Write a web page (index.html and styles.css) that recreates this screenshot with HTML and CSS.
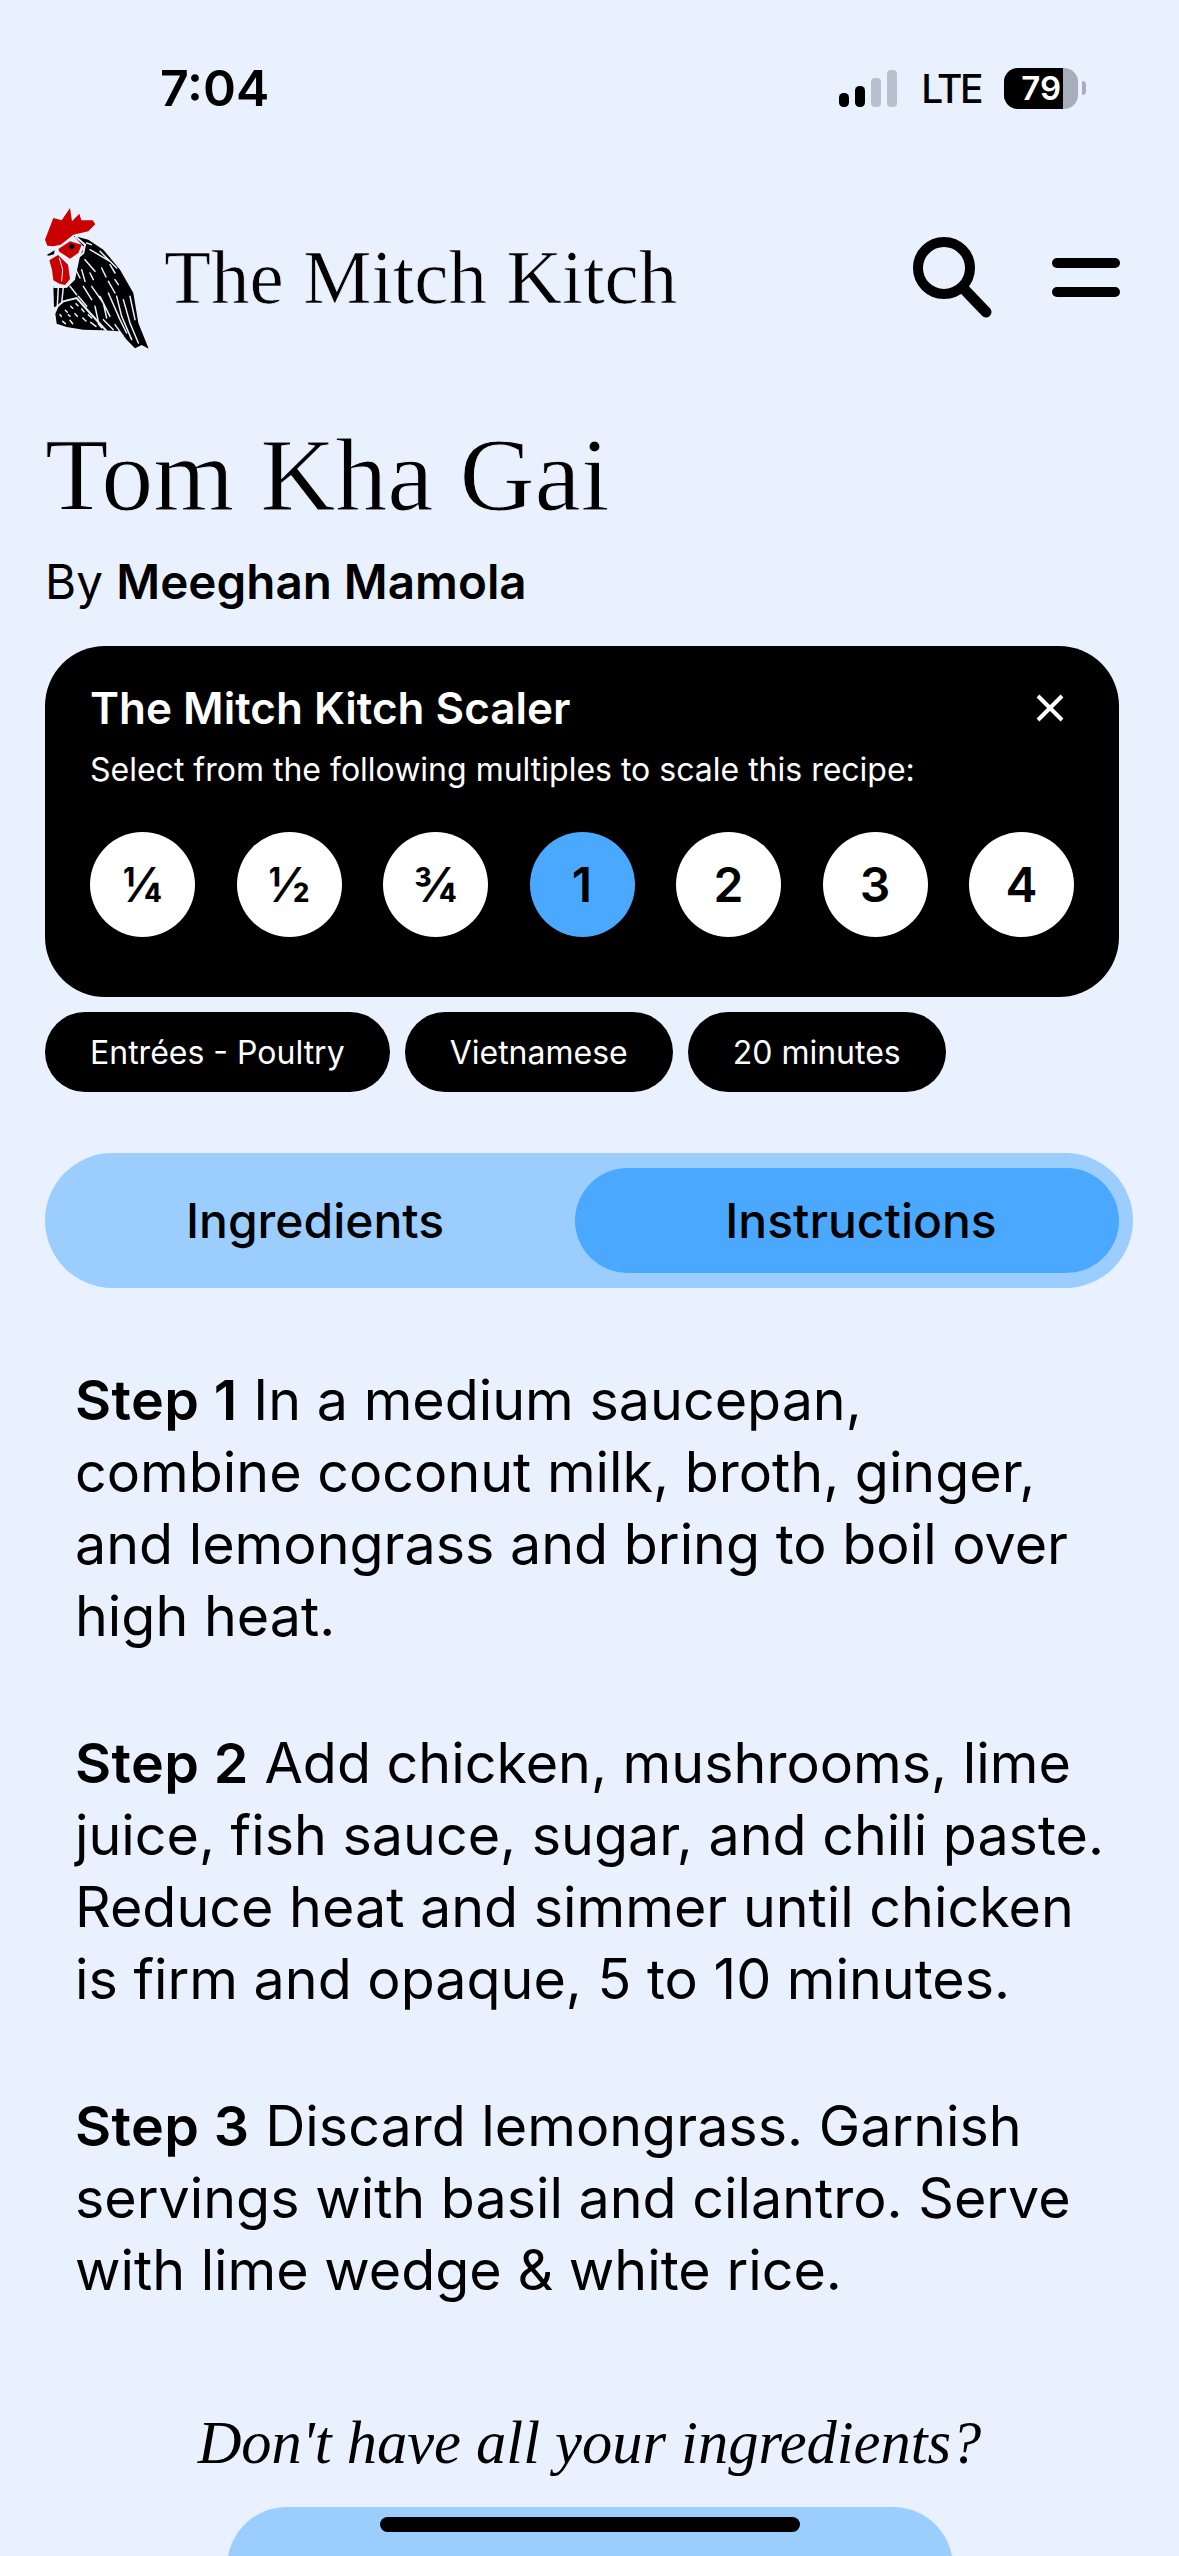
FILE: index.html
```html
<!DOCTYPE html>
<html lang="en">
<head>
<meta charset="utf-8">
<title>Tom Kha Gai</title>
<link rel="stylesheet" href="styles.css">
</head>
<body>
<div class="page">
  <div class="status">
    <span class="time">7:04</span>
    <div class="status-right">
      <svg class="signal" width="58" height="37" viewBox="0 0 58 37">
        <rect x="0" y="23" width="10" height="14" rx="4.5" fill="#000"/>
        <rect x="16" y="16" width="10" height="21" rx="4.5" fill="#000"/>
        <rect x="32" y="8" width="10" height="29" rx="4" fill="#b9c1d0"/>
        <rect x="48" y="0" width="10" height="37" rx="4" fill="#b9c1d0"/>
      </svg>
      <span class="lte">LTE</span>
      <div class="battery">
        <div class="battery-body"><div class="battery-level"><span>79</span></div></div>
        <div class="battery-nub"></div>
      </div>
    </div>
  </div>

  <header class="site-header">
    <svg class="logo" width="104" height="142" viewBox="75 55 312 426">
      <path fill="#000" d="M160 138 205 150 250 180 300 240 340 310 355 400 386 477 365 466 345 476 320 450 300 425 250 422 190 420 140 412 110 402 106 372 116 350 102 352 100 290 140 295 165 270 180 200 192 172Z"/>
      <g fill="none" stroke="#e9f1ff" stroke-width="4.5" stroke-linecap="round">
        <path d="M200 160 214 165M210 180 270 215M240 185 290 235M270 225 285 250M195 210 225 245M210 250 220 270M245 235 258 262M165 235 180 265M185 240 195 275M265 275 285 310M285 270 295 285"/>
        <path d="M150 290 170 315M215 290 250 340 260 385M240 320 270 380M265 310 300 390 320 430M290 320 305 380 335 450M310 330 330 400 355 460M330 320 345 390M190 290 215 330M175 320 200 350M225 350 235 395M250 390 280 420M285 405 310 440"/>
        <path d="M115 290 112 348M130 292 125 340"/>
        <path d="M120 375 124 380M136 362 142 368M152 350 158 356M168 342 174 348M128 395 136 402M150 392 158 402M165 372 172 380M185 358 192 366M188 385 198 394M212 398 228 410M235 402 245 414M205 375 215 385M145 375 150 380"/>
      </g>
      <path fill="none" stroke="#e9f1ff" stroke-width="6" stroke-linecap="round" d="M106 356 130 335 170 325 210 370 258 422"/>
      <path fill="none" stroke="#e9f1ff" stroke-width="6" d="M165 140 195 165 190 190 160 215 140 205"/>
      <path fill="#c90000" d="M75 150 100 85 125 92 150 55 156 95 178 72 184 92 218 92 226 104 205 125 160 135 122 165 100 170 82 168Z"/>
      <path fill="#c90000" d="M115 178 150 155 185 165 175 190 150 207 118 186Z"/>
      <path fill="none" stroke="#e9f1ff" stroke-width="6" d="M100 292 135 292"/>
      <path fill="#c90000" d="M88 212 114 196 144 225 150 268 135 286 118 282 100 272 96 240Z"/>
      <path fill="none" stroke="#e9f1ff" stroke-width="3" d="M118 205 128 240 125 275"/>
      <path fill="#000" d="M80 196 104 182 102 194 86 198Z"/>
      <circle cx="155" cy="170" r="8" fill="#000"/>
    </svg>
    <span class="brand">The Mitch Kitch</span>
    <div class="header-actions">
      <svg class="search" width="80" height="81" viewBox="0 0 80 81">
        <circle cx="31" cy="31" r="26" fill="none" stroke="#000" stroke-width="10"/>
        <path d="M50 51 73 75" fill="none" stroke="#000" stroke-width="11" stroke-linecap="round"/>
      </svg>
      <div class="burger"><i></i><i></i></div>
    </div>
  </header>

  <h1 class="title">Tom Kha Gai</h1>
  <p class="byline">By <strong>Meeghan Mamola</strong></p>

  <section class="scaler">
    <div class="scaler-head">
      <h2>The Mitch Kitch Scaler</h2>
      <svg class="close" width="30" height="30" viewBox="0 0 30 30"><path d="M3 3 27 27M27 3 3 27" stroke="#fff" stroke-width="4" fill="none"/></svg>
    </div>
    <p class="scaler-sub">Select from the following multiples to scale this recipe:</p>
    <div class="multiples">
      <span class="multiple">¼</span>
      <span class="multiple">½</span>
      <span class="multiple">¾</span>
      <span class="multiple active">1</span>
      <span class="multiple">2</span>
      <span class="multiple">3</span>
      <span class="multiple">4</span>
    </div>
  </section>

  <div class="tags">
    <span class="tag">Entrées - Poultry</span>
    <span class="tag">Vietnamese</span>
    <span class="tag">20 minutes</span>
  </div>

  <div class="tabs">
    <span class="tab">Ingredients</span>
    <span class="tab active">Instructions</span>
  </div>

  <div class="steps">
    <p><strong>Step 1</strong> In a medium saucepan,<br>combine coconut milk, broth, ginger,<br>and lemongrass and bring to boil over<br>high heat.</p>
    <p><strong>Step 2</strong> Add chicken, mushrooms, lime<br>juice, fish sauce, sugar, and chili paste.<br>Reduce heat and simmer until chicken<br>is firm and opaque, 5 to 10 minutes.</p>
    <p><strong>Step 3</strong> Discard lemongrass. Garnish<br>servings with basil and cilantro. Serve<br>with lime wedge &amp; white rice.</p>
  </div>

  <p class="prompt">Don't have all your ingredients?</p>
  <div class="cta"></div>
</div>
<div class="home-indicator"></div>
</body>
</html>
```
FILE: styles.css
```css
* { box-sizing: border-box; }
html, body { margin: 0; padding: 0; }
body {
  width: 1179px;
  height: 2556px;
  overflow: hidden;
  background: #e9f1ff;
  color: #000;
  font-family: Inter, "Liberation Sans", sans-serif;
}
.page { padding: 0 45px; height: 2556px; overflow: hidden; }
h1, h2, p { margin: 0; font-weight: inherit; }

.status {
  display: flex;
  justify-content: space-between;
  align-items: center;
  height: 176px;
  padding: 0 48px 0 115px;
}
.time { font-size: 50px; font-weight: 600; line-height: 1; }
.status-right { display: flex; align-items: center; }
.lte { font-size: 39px; font-weight: 500; line-height: 1; margin-left: 24px; letter-spacing: -2.5px; }
.battery { display: flex; align-items: center; margin-left: 23px; }
.battery-body {
  width: 74px; height: 41px; border-radius: 14px;
  background: #a8adba; overflow: hidden;
}
.battery-level {
  width: 59px; height: 41px; background: #000; color: #fff;
  font-size: 33px; font-weight: 600; line-height: 41px; text-align: right; padding-right: 2px;
}
.battery-nub { width: 4px; height: 14px; background: #a8adba; border-radius: 0 4px 4px 0; margin-left: 4px; }

.site-header {
  display: flex;
  align-items: center;
  height: 142px;
  margin-top: 32px;
  padding-right: 14px;
}
.logo { flex: none; }
.brand {
  font-family: "Liberation Serif", serif;
  font-size: 77px;
  margin-left: 15px;
  margin-top: -4px;
  line-height: 1;
  -webkit-text-stroke: 0.7px #e9f1ff;
}
.header-actions { margin-left: auto; display: flex; align-items: center; }
.search { margin-top: -4px; }
.burger { display: flex; flex-direction: column; gap: 19px; margin-left: 59px; margin-top: -4px; }
.burger i { display: block; width: 68px; height: 10px; background: #000; border-radius: 5px; }

.title {
  font-family: "Liberation Serif", serif;
  font-size: 104px;
  line-height: 1;
  margin-top: 73px;
  -webkit-text-stroke: 1px #e9f1ff;
}
.byline { font-size: 47.6px; line-height: 56px; margin-top: 27px; }
.byline strong { font-weight: 600; }

.scaler {
  margin-top: 36px;
  width: 1074px;
  height: 351px;
  background: #000;
  color: #fff;
  border-radius: 60px;
  padding: 35px 45px 0;
}
.scaler-head { display: flex; justify-content: space-between; align-items: center; height: 54px; }
.scaler-head h2 { font-size: 44px; font-weight: 600; line-height: 54px; }
.close { margin-right: 9px; }
.scaler-sub { font-size: 32px; line-height: 40px; margin-top: 15px; }
.multiples { display: flex; justify-content: space-between; margin-top: 42px; }
.multiple {
  width: 105px; height: 105px; border-radius: 50%;
  background: #fff; color: #000;
  display: flex; align-items: center; justify-content: center;
  font-size: 48px; font-weight: 600;
}
.multiple.active { background: #4ba8ff; }

.tags { display: flex; gap: 15px; margin-top: 15px; }
.tag {
  background: #000; color: #fff;
  height: 80px; border-radius: 40px;
  padding: 0 45px;
  display: flex; align-items: center;
  font-size: 32px;
}

.tabs {
  margin-top: 61px;
  width: 1088px;
  height: 135px;
  border-radius: 68px;
  background: #9bcdff;
  padding: 15px 14px 15px 0;
  display: grid;
  grid-template-columns: 530px 544px;
}
.tab {
  display: flex; align-items: center; justify-content: center;
  font-size: 48px; font-weight: 500;
  border-radius: 53px;
  padding-left: 10px;
}
.tab.active { background: #4ba8ff; padding-left: 28px; }

.steps { padding: 76px 0 0 30px; font-size: 55.6px; line-height: 72px; white-space: nowrap; }
.steps p + p { margin-top: 75px; }
.steps strong { font-weight: 600; letter-spacing: 0.4px; }

.prompt {
  font-family: "Liberation Serif", serif;
  font-style: italic;
  font-size: 60.5px;
  line-height: 72px;
  text-align: center;
  margin-top: 101px;
}
.cta {
  margin: 28px auto 0;
  width: 726px;
  height: 120px;
  border-radius: 60px;
  background: #9bcdff;
}
.home-indicator {
  position: fixed;
  left: 380px; top: 2517px;
  width: 420px; height: 15px;
  border-radius: 8px;
  background: #000;
}
```
